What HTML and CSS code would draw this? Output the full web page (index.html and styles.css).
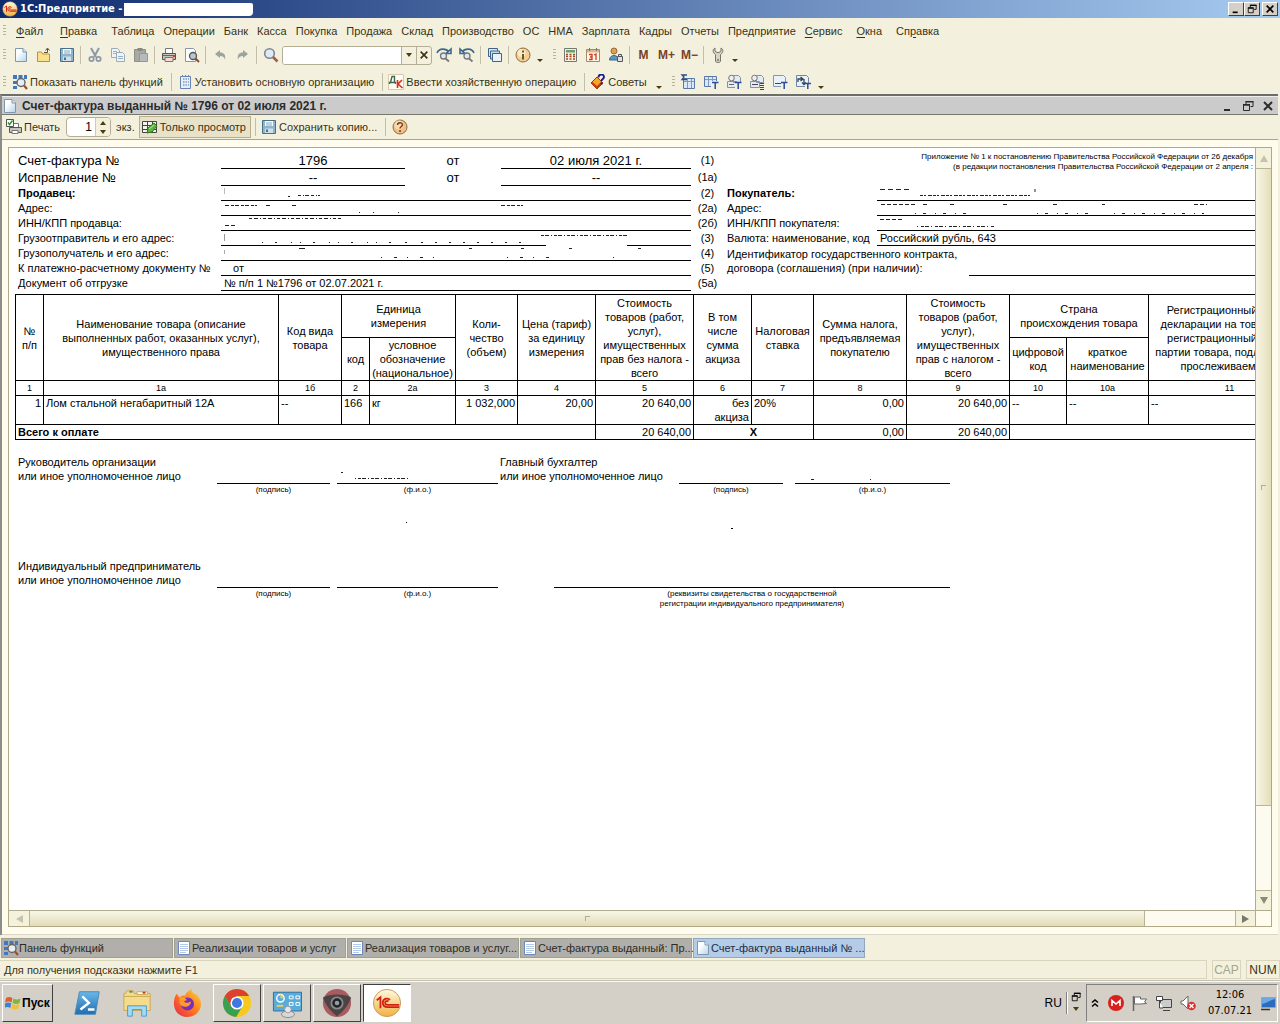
FILE: index.html
```html
<!DOCTYPE html>
<html lang="ru">
<head>
<meta charset="utf-8">
<title>1С:Предприятие</title>
<link rel="stylesheet" href="styles.css">
</head>
<body>
<svg class="defs" aria-hidden="true">
  <defs>
    <linearGradient id="g-page" x1="0" y1="0" x2="1" y2="1"><stop offset="0.3" stop-color="#fff"/><stop offset="1" stop-color="#b4d4ea"/></linearGradient>
    <linearGradient id="g-orb" x1="0" y1="0" x2="0" y2="1"><stop offset="0" stop-color="#fffbe0"/><stop offset="1" stop-color="#f0b040"/></linearGradient>
    <linearGradient id="g-blue" x1="0" y1="0" x2="0" y2="1"><stop offset="0" stop-color="#6ab8e8"/><stop offset="1" stop-color="#1f6db0"/></linearGradient>
    <linearGradient id="g-fire" x1="1" y1="0" x2="0" y2="1"><stop offset="0" stop-color="#ffd838"/><stop offset="0.5" stop-color="#ff7a20"/><stop offset="1" stop-color="#e8204c"/></linearGradient>
  </defs>
  <symbol id="i-1c" viewBox="0 0 32 32"><circle cx="16" cy="16" r="14.5" fill="url(#g-orb)" stroke="#c89858"/><path d="M5 13l4-3v11.500M19 13c-1-2.500-7-2.500-7.500 2.500 0 4 2.500 5 5.500 5h12M17.500 14.500c-1-1-3.500-1-3.500 1.200 0 1.800 1.500 2.300 3 2.300h12" fill="none" stroke="#d42010" stroke-width="1.900"/></symbol>
  <symbol id="i-new" viewBox="0 0 16 16"><path d="M2.500 1.500h7.500l3.500 3.500v9.500h-11z" fill="url(#g-page)" stroke="#7f98b0"/><path d="M10 1.500V5h3.500" fill="#dce9f4" stroke="#7f98b0"/></symbol>
  <symbol id="i-doc" viewBox="0 0 16 16"><path d="M2.500 1.500h11v13h-11z" fill="#fff" stroke="#6a88b8"/><path d="M4 4.500h8M4 6.500h8M4 8.500h8M4 10.500h8M4 12.500h6" stroke="#b4cae8"/></symbol>
  <symbol id="i-open" viewBox="0 0 16 16"><path d="M1.500 14.500V5h4l1 2h7v7.500z" fill="#fbe08a" stroke="#b5914a"/><path d="M8 5.500h3.500V2M9.500 3.500l2-2.500 2 2.500" fill="none" stroke="#5a5030"/></symbol>
  <symbol id="i-save" viewBox="0 0 16 16"><path d="M1.500 1.500h13v13h-13z" fill="#8fb4cc" stroke="#47708c"/><path d="M4 2h8v5H4z" fill="#f4fafd"/><path d="M4 9.500h8V14H4z" fill="#cfe0ea"/><path d="M5 4h6M5 6h6" stroke="#88a8bc"/><path d="M5 10.500h2V13H5z" fill="#47708c"/></symbol>
  <symbol id="i-cut" viewBox="0 0 16 16"><path d="M4 1l5 9M12 1L7 10" stroke="#8c98a4" stroke-width="2"/><circle cx="4.500" cy="12" r="2.200" fill="none" stroke="#8c98a4" stroke-width="1.700"/><circle cx="11.500" cy="12" r="2.200" fill="none" stroke="#8c98a4" stroke-width="1.700"/></symbol>
  <symbol id="i-copy" viewBox="0 0 16 16"><path d="M1.500 1.500h6l2 2v7h-8z" fill="#eef3f6" stroke="#9aabba"/><path d="M6.500 5.500h6l2 2v7h-8z" fill="#eef3f6" stroke="#9aabba"/><path d="M3 4.500h4M3 6.500h3M8 9.500h5M8 11.500h5" stroke="#9ab0c4"/></symbol>
  <symbol id="i-paste" viewBox="0 0 16 16"><path d="M1.500 2.500h11v12h-11z" fill="#a9a9a0" stroke="#8f8f88"/><path d="M4.500 1h5v3h-5z" fill="#8a8a84"/><path d="M6.500 6.500h8v8h-8z" fill="#b4bac0" stroke="#8f98a0"/></symbol>
  <symbol id="i-print" viewBox="0 0 16 16"><path d="M4.500 1.500h7v5h-7z" fill="#fff" stroke="#777"/><path d="M1.500 6.500h13v6h-13z" fill="#c8c4bc" stroke="#555"/><path d="M4 10.500h8v4H4z" fill="#f6dcd4" stroke="#777"/><path d="M2 8.500h12" stroke="#666"/><path d="M12 9h2v1h-2z" fill="#d04020"/></symbol>
  <symbol id="i-preview" viewBox="0 0 16 16"><path d="M1.500 1.500h8l2 2v11h-10z" fill="#fff" stroke="#8298b0"/><circle cx="9" cy="9" r="3.500" fill="#b9c6ce" stroke="#555" stroke-width="1.300"/><path d="M11.500 11.500L15 15" stroke="#834a3a" stroke-width="2"/></symbol>
  <symbol id="i-undo" viewBox="0 0 16 16"><path d="M3 7l5-4v2.500c4 0 6 2.500 5 7-1-3-2.500-3.500-5-3.500V11z" fill="#9da39f"/></symbol>
  <symbol id="i-redo" viewBox="0 0 16 16"><path d="M13 7L8 3v2.500c-4 0-6 2.500-5 7 1-3 2.500-3.500 5-3.500V11z" fill="#9da39f"/></symbol>
  <symbol id="i-find" viewBox="0 0 16 16"><circle cx="6.500" cy="6.500" r="4.800" fill="#dfeaf4" stroke="#7d8896" stroke-width="1.600"/><path d="M10 10l4.500 4.500" stroke="#a0604a" stroke-width="2.600"/></symbol>
  <symbol id="i-findnext" viewBox="0 0 16 16"><path d="M1 6c2-5 9-5 12-1M15 2v4.500h-5z" fill="none" stroke="#3f6a8c" stroke-width="1.600"/><circle cx="7.500" cy="9" r="3" fill="#dfe8ee" stroke="#777" stroke-width="1.300"/><path d="M9.500 11.500l3.500 3" stroke="#777" stroke-width="1.800"/></symbol>
  <symbol id="i-findprev" viewBox="0 0 16 16"><path d="M15 6C13 1 6 1 3 5M1 2v4.500h5z" fill="none" stroke="#3f6a8c" stroke-width="1.600"/><circle cx="8" cy="9" r="3" fill="#dfe8ee" stroke="#777" stroke-width="1.300"/><path d="M10 11.500l3.500 3" stroke="#777" stroke-width="1.800"/></symbol>
  <symbol id="i-windows" viewBox="0 0 16 16"><path d="M1.500 1.500h9v8h-9z" fill="#dbe6ef" stroke="#3e6488"/><path d="M3.500 4h9v8h-9z" fill="#c6d9e8" stroke="#3e6488"/><path d="M5.500 6.500h9v8h-9z" fill="#e8f2f8" stroke="#3e6488"/></symbol>
  <symbol id="i-info" viewBox="0 0 16 16"><circle cx="8" cy="8" r="7" fill="#f3cf94" stroke="#8f6a3c"/><circle cx="6.500" cy="6" r="4" fill="#fbe9c8"/><path d="M8 7v5.500M8 3.500v2" stroke="#6a5a20" stroke-width="2"/></symbol>
  <symbol id="i-help" viewBox="0 0 16 16"><circle cx="8" cy="8" r="7" fill="#f2bf86" stroke="#8f6a3c"/><circle cx="7" cy="6" r="4.500" fill="#f9dcb4"/><path d="M5.500 6c0-3 5-3 5-.200C10.500 7.500 8 7.500 8 9.500M8 11v2" fill="none" stroke="#7a3f18" stroke-width="1.500"/></symbol>
  <symbol id="i-calc" viewBox="0 0 16 16"><path d="M2.500 1.500h12v13h-12z" fill="#f6f0d8" stroke="#777"/><path d="M4 3h9v2.500H4z" fill="#6aa06a"/><path d="M4 7.500h9M4 9.500h9M4 12h9" stroke="#a04830" stroke-width="1.300" stroke-dasharray="2 1.500"/></symbol>
  <symbol id="i-cal" viewBox="0 0 16 16"><path d="M1.500 2.500h13v12h-13z" fill="#fff6e8" stroke="#a58a68"/><path d="M2 3h12v2.500H2z" fill="#d8b890"/><path d="M4 7.500h3v5H4M5 10h2M9 8l2-1v6" fill="none" stroke="#d03a20" stroke-width="1.300"/><path d="M4.500 1v3M11.500 1v3" stroke="#776"/></symbol>
  <symbol id="i-user" viewBox="0 0 16 16"><circle cx="6" cy="4" r="3" fill="#e0a050" stroke="#9a6830"/><path d="M1.500 13c0-6 9-6 9 0z" fill="#5c98c0" stroke="#3a6888"/><path d="M9.500 9.500h5v5h-5zM10.500 9V7.500h3V9" fill="#dde2e4" stroke="#555"/></symbol>
  <symbol id="i-wrench" viewBox="0 0 16 16"><path d="M5 1v3l2 1.500h2L11 4V1c3 1.500 2 5-.5 6.500V14c0 2-5 2-5 0V7.500C3 6 2 2.500 5 1z" fill="#d8d4c4" stroke="#76746c"/><circle cx="8" cy="13" r="1" fill="#76746c"/></symbol>
  <symbol id="i-panel" viewBox="0 0 16 16"><path d="M1 1h4v4H1zM6.500 1h4v4h-4zM12 1h3v4h-3zM1 7h4v3H1zM1 12h4v3H1z" fill="#3f78c0"/><circle cx="9" cy="8.500" r="4" fill="#e8eef4" stroke="#666" stroke-width="1.400"/><path d="M12 11.500l3 3.500" stroke="#9a5034" stroke-width="2.200"/></symbol>
  <symbol id="i-org" viewBox="0 0 16 16"><path d="M3.500 2.500h10v12h-10z" fill="#e6eef8" stroke="#6884b0"/><path d="M6 5h6M6 8h6M6 11h6" stroke="#7f9cc8" stroke-width="1.500" stroke-dasharray="1.500 1"/><path d="M5.500 1v2M8.500 1v2M11.500 1v2" stroke="#6884b0"/></symbol>
  <symbol id="i-dk" viewBox="0 0 16 16"><path d="M.5.500h15v15H.5z" fill="#fffdf6" stroke="#d8c8b0"/><path d="M1.500 10V8.500h6V10M2.500 8.500L4 2.500h2.500v6" fill="none" stroke="#3a6a4a" stroke-width="1.400"/><path d="M9.500 6v8M14 6l-4 4 4.500 4" fill="none" stroke="#d83018" stroke-width="1.600"/></symbol>
  <symbol id="i-tips" viewBox="0 0 16 16"><path d="M1 9l6-6 6 6-6 6z" fill="#f4a820" stroke="#a03810"/><path d="M1 9l6 6 6-6-2-1-4 4-4.500-4z" fill="#c83c14"/><path d="M8.500 3.500C8.500-.5 14-.5 14 3c0 2-2.500 2-2.500 4M11.500 8.500v2" fill="none" stroke="#20208c" stroke-width="1.900"/></symbol>
  <symbol id="i-sum" viewBox="0 0 16 16"><path d="M3.500 4.500h11v10h-11z" fill="#dce8f6" stroke="#5878a8"/><path d="M7.500 5v9M11.500 5v9M4 7.500h10" stroke="#7e98c0"/><path d="M7 1H2l2 2-2 2.500h5" fill="none" stroke="#2c4c88" stroke-width="1.300"/></symbol>
  <symbol id="i-tabt" viewBox="0 0 16 16"><path d="M1.500 2.500h12v10h-12z" fill="#dce8f6" stroke="#5878a8"/><path d="M5.500 3v9M9.500 3v9M2 5.500h11" stroke="#7e98c0"/><path d="M8 7h8v9H8z" fill="#f3f1de"/><path d="M9 8.500h6.500M12.200 8.500V15" stroke="#2c4c98" stroke-width="1.500"/></symbol>
  <symbol id="i-lett" viewBox="0 0 16 16"><path d="M1.500 7.500h9v6h-9zM7.500 1.500h5l2 2v5h-7z" fill="#e4ebf2" stroke="#8492a4"/><circle cx="5.500" cy="4" r="2.800" fill="#eee" stroke="#777"/><path d="M3 10.500h5" stroke="#667"/><path d="M9 8h7v8H9z" fill="#f3f1de"/><path d="M9 8.500h6.500M12.200 8.500V15" stroke="#2c4c98" stroke-width="1.500"/></symbol>
  <symbol id="i-letl" viewBox="0 0 16 16"><path d="M1.500 7.500h9v6h-9zM7.500 1.500h5l2 2v5h-7z" fill="#e4ebf2" stroke="#8492a4"/><circle cx="5.500" cy="4" r="2.800" fill="#eee" stroke="#777"/><path d="M3 10.500h6M11 9.500h4M11 11.500h4M11 13.500h4M11 15.500h4" stroke="#445"/></symbol>
  <symbol id="i-doct" viewBox="0 0 16 16"><path d="M1.500 1.500h10l2 2v9h-12z" fill="#e9f1f9" stroke="#8098b8"/><path d="M3 9.500h6" stroke="#445"/><path d="M9 8h7v8H9z" fill="#f3f1de"/><path d="M9 8.500h6.500M12.200 8.500V15" stroke="#2c4c98" stroke-width="1.500"/></symbol>
  <symbol id="i-arrt" viewBox="0 0 16 16"><path d="M1.500 1.500h10l2 2v9h-12z" fill="#e9f1f9" stroke="#7088a8"/><path d="M3 8V5h4M5.500 3L8 5 5.500 7M9 5v5M7 8.500l2 2 2-2" fill="none" stroke="#345" stroke-width="1.300"/><path d="M10 9h6v7h-6z" fill="#f3f1de"/><path d="M10 9.500h6M12.800 9.500V15" stroke="#2c4c98" stroke-width="1.500"/></symbol>
  <symbol id="i-printok" viewBox="0 0 16 16"><path d="M6.500 4.500h6v4h-6z" fill="#fff" stroke="#777"/><path d="M3.500 8.500h12v5h-12z" fill="#c8c4bc" stroke="#555"/><path d="M6 11.500h6v3H6z" fill="#fff" stroke="#777"/><path d="M.5.500h7v7h-7z" fill="#fff" stroke="#555"/><path d="M2 3.500l1.500 2 3-4" fill="none" stroke="#2c9a2c" stroke-width="1.500"/></symbol>
  <symbol id="i-view" viewBox="0 0 16 16"><path d="M.5 2.500h14v11H.5z" fill="#f4f4ec" stroke="#444"/><path d="M1 6.500h13M1 10.500h13M5.500 3v10M10.500 3v10" stroke="#444"/><path d="M5 14l1-5 6-5 3 3-5 6z" fill="#5cb838" stroke="#2d7a20"/><path d="M7 10l5-4" stroke="#b8e8a0"/></symbol>
  <symbol id="i-min" viewBox="0 0 12 12"><path d="M2 9h6v2H2z" fill="currentColor"/></symbol>
  <symbol id="i-restore" viewBox="0 0 12 12"><path d="M4 4V1.500h7v5H8.500M1.500 5h6v5.500h-6z" fill="none" stroke="currentColor"/><path d="M3.500 1h8v1.500h-8zM1 4h7v1.500H1z" fill="currentColor"/></symbol>
  <symbol id="i-close" viewBox="0 0 12 12"><path d="M2 2l8 8M10 2l-8 8" stroke="currentColor" stroke-width="2"/></symbol>
</svg>

<header class="titlebar">
  <svg class="ico"><use href="#i-1c"/></svg>
  <h1 class="titlebar-text">1С:Предприятие -</h1>
  <span class="titlebar-blank"></span>
  <span class="win-controls">
    <button class="winbtn" aria-label="Свернуть"><svg><use href="#i-min"/></svg></button>
    <button class="winbtn" aria-label="Восстановить"><svg><use href="#i-restore"/></svg></button>
    <button class="winbtn winbtn-close" aria-label="Закрыть"><svg><use href="#i-close"/></svg></button>
  </span>
</header>

<nav class="menubar">
  <span class="grip"></span>
  <button class="menu wide"><u>Ф</u>айл</button>
  <button class="menu roomier"><u>П</u>равка</button>
  <button class="menu">Таблица</button>
  <button class="menu">Операции</button>
  <button class="menu">Банк</button>
  <button class="menu">Касса</button>
  <button class="menu">Покупка</button>
  <button class="menu">Продажа</button>
  <button class="menu">Склад</button>
  <button class="menu">Производство</button>
  <button class="menu">ОС</button>
  <button class="menu">НМА</button>
  <button class="menu">Зарплата</button>
  <button class="menu">Кадры</button>
  <button class="menu">Отчеты</button>
  <button class="menu">Предприятие</button>
  <button class="menu roomier"><u>С</u>ервис</button>
  <button class="menu roomier"><u>О</u>кна</button>
  <button class="menu">Сп<u>р</u>авка</button>
</nav>

<div class="toolbar" role="toolbar" aria-label="Стандартная">
  <span class="grip"></span>
  <button class="tool" aria-label="Новый"><svg class="ico"><use href="#i-new"/></svg></button>
  <button class="tool" aria-label="Открыть"><svg class="ico"><use href="#i-open"/></svg></button>
  <button class="tool" aria-label="Сохранить"><svg class="ico"><use href="#i-save"/></svg></button>
  <span class="sep"></span>
  <button class="tool" aria-label="Вырезать"><svg class="ico"><use href="#i-cut"/></svg></button>
  <button class="tool" aria-label="Копировать"><svg class="ico"><use href="#i-copy"/></svg></button>
  <button class="tool" aria-label="Вставить"><svg class="ico"><use href="#i-paste"/></svg></button>
  <span class="sep"></span>
  <button class="tool" aria-label="Печать"><svg class="ico"><use href="#i-print"/></svg></button>
  <button class="tool" aria-label="Просмотр"><svg class="ico"><use href="#i-preview"/></svg></button>
  <span class="sep"></span>
  <button class="tool" aria-label="Отменить"><svg class="ico"><use href="#i-undo"/></svg></button>
  <button class="tool" aria-label="Повторить"><svg class="ico"><use href="#i-redo"/></svg></button>
  <span class="sep"></span>
  <button class="tool" aria-label="Найти"><svg class="ico"><use href="#i-find"/></svg></button>
  <span class="combo">
    <input class="combo-input" type="text" aria-label="Строка поиска">
    <button class="combo-btn" aria-label="Список"><span class="tri-down"></span></button>
    <button class="combo-btn" aria-label="Очистить"><svg class="x"><use href="#i-close"/></svg></button>
  </span>
  <button class="tool" aria-label="Найти далее"><svg class="ico"><use href="#i-findnext"/></svg></button>
  <button class="tool" aria-label="Найти ранее"><svg class="ico"><use href="#i-findprev"/></svg></button>
  <span class="sep"></span>
  <button class="tool" aria-label="Окна"><svg class="ico"><use href="#i-windows"/></svg></button>
  <span class="sep"></span>
  <button class="tool" aria-label="Справка"><svg class="ico"><use href="#i-info"/></svg></button>
  <button class="more" aria-label="Ещё"><span class="tri-down"></span></button>
  <span class="grip grip-mid"></span>
  <button class="tool" aria-label="Калькулятор"><svg class="ico"><use href="#i-calc"/></svg></button>
  <button class="tool" aria-label="Календарь"><svg class="ico"><use href="#i-cal"/></svg></button>
  <button class="tool" aria-label="Пользователь"><svg class="ico"><use href="#i-user"/></svg></button>
  <span class="sep"></span>
  <button class="tool mem">M</button>
  <button class="tool mem">M+</button>
  <button class="tool mem">M−</button>
  <span class="sep"></span>
  <button class="tool" aria-label="Сервис"><svg class="ico"><use href="#i-wrench"/></svg></button>
  <button class="more" aria-label="Ещё"><span class="tri-down"></span></button>
</div>

<div class="toolbar toolbar-2" role="toolbar" aria-label="Функции">
  <span class="grip"></span>
  <button class="labelled"><svg class="ico"><use href="#i-panel"/></svg>Показать панель функций</button>
  <span class="sep"></span>
  <button class="labelled"><svg class="ico"><use href="#i-org"/></svg>Установить основную организацию</button>
  <span class="sep"></span>
  <button class="labelled"><svg class="ico"><use href="#i-dk"/></svg>Ввести хозяйственную операцию</button>
  <span class="sep"></span>
  <button class="labelled"><svg class="ico"><use href="#i-tips"/></svg>Советы</button>
  <button class="more" aria-label="Ещё"><span class="tri-down"></span></button>
  <span class="grip grip-mid"></span>
  <button class="tool" aria-label="Итоги"><svg class="ico"><use href="#i-sum"/></svg></button>
  <button class="tool" aria-label="Таблица"><svg class="ico"><use href="#i-tabt"/></svg></button>
  <button class="tool" aria-label="Поиск в тексте"><svg class="ico"><use href="#i-lett"/></svg></button>
  <button class="tool" aria-label="Поиск в списке"><svg class="ico"><use href="#i-letl"/></svg></button>
  <button class="tool" aria-label="Текст"><svg class="ico"><use href="#i-doct"/></svg></button>
  <button class="tool" aria-label="Переход"><svg class="ico"><use href="#i-arrt"/></svg></button>
  <button class="more" aria-label="Ещё"><span class="tri-down"></span></button>
</div>

<main class="child">
  <div class="child-title">
    <svg class="ico"><use href="#i-new"/></svg>
    <h2 class="child-name">Счет-фактура выданный № 1796 от 02 июля 2021 г.</h2>
    <span class="child-controls">
      <button class="flat" aria-label="Свернуть"><svg><use href="#i-min"/></svg></button>
      <button class="flat" aria-label="Восстановить"><svg><use href="#i-restore"/></svg></button>
      <button class="flat" aria-label="Закрыть"><svg><use href="#i-close"/></svg></button>
    </span>
  </div>
  <div class="toolbar child-tools" role="toolbar" aria-label="Документ">
    <button class="labelled"><svg class="ico"><use href="#i-printok"/></svg>Печать</button>
    <span class="spin">
      <input class="spin-input" id="copies" type="text" value="1">
      <span class="spin-btns">
        <button class="spin-btn" aria-label="Больше"><span class="tri-up"></span></button>
        <button class="spin-btn" aria-label="Меньше"><span class="tri-down"></span></button>
      </span>
    </span>
    <label class="spin-label" for="copies">экз.</label>
    <button class="labelled pressed" aria-pressed="true"><svg class="ico"><use href="#i-view"/></svg>Только просмотр</button>
    <span class="sep"></span>
    <button class="labelled"><svg class="ico"><use href="#i-save"/></svg>Сохранить копию...</button>
    <span class="sep"></span>
    <button class="tool" aria-label="Справка"><svg class="ico"><use href="#i-help"/></svg></button>
  </div>

  <div class="pane">
    <div class="sheet">
      <div class="paper">
        <section class="head">
          <div class="lead">
            <span class="big">Счет-фактура №</span><span class="big val mid">1796</span><span class="big mid">от</span><span class="big val mid">02 июля 2021 г.</span><span class="num">(1)</span>
            <span class="big">Исправление №</span><span class="big val mid">--</span><span class="big mid">от</span><span class="big val mid">--</span><span class="num">(1а)</span>
            <p class="annex">Приложение № 1 к постановлению Правительства Российской Федерации от 26 декабря<br>(в редакции постановления Правительства Российской Федерации от 2 апреля :</p>
          </div>
          <div class="party seller">
            <b>Продавец:</b>
            <span class="val"><svg class="rest"><path d="M3.500 2v6" stroke="#bbb"/><path d="M67 10.500h2M77 9.500h22" stroke-dasharray="3 2 1 1 4 2"/></svg></span><span class="num">(2)</span>
            <span>Адрес:</span>
            <span class="val"><svg class="rest"><path d="M4 4.500h32M45 4.500h6M71 4.500h6M280 4.500h22" stroke-dasharray="4 2 3 1"/><path d="M138 11.500h1M152 11.500h1M177 11.500h1"/></svg></span><span class="num">(2а)</span>
            <span>ИНН/КПП продавца:</span>
            <span class="val"><svg class="rest"><path d="M28 2.500h92" stroke-dasharray="3 2 4 2 1 2"/><path d="M4 9.500h10" stroke-dasharray="4 2"/></svg></span><span class="num">(2б)</span>
            <span>Грузоотправитель и его адрес:</span>
            <span class="val gap"><svg class="rest"><path d="M3.500 3v7" stroke="#999"/><path d="M41 11.500h140" stroke-dasharray="1 12 2 14 1 8"/><path d="M184 11.500h6M200 11.500h110" stroke-dasharray="2 12"/><path d="M320 4.500h88" stroke-dasharray="3 1 4 2 1 2"/></svg></span><span class="num">(3)</span>
            <span>Грузополучатель и его адрес:</span>
            <span class="val"><svg class="rest"><path d="M3.500 4v4" stroke="#aaa"/><path d="M78 2.500h6M248 2.500h3M300 2.500h3M348 2.500h3M417 2.500h3"/><path d="M160 11.500h54M286 11.500h46M392 11.500h10" stroke-dasharray="1 12 3 10"/></svg></span><span class="num">(4)</span>
            <span>К платежно-расчетному документу №</span>
            <span class="val indent">от</span><span class="num">(5)</span>
            <span>Документ об отгрузке</span>
            <span class="val">№ п/п 1 №1796 от 02.07.2021 г.</span><span class="num">(5а)</span>
          </div>
          <div class="party buyer">
            <b>Покупатель:</b>
            <span class="val"><svg class="rest"><path d="M3 3.500h30M158 3v3" stroke-dasharray="5 3"/><path d="M43 9.500h112" stroke-dasharray="3 1 2 2 4 1"/></svg></span>
            <span>Адрес:</span>
            <span class="val"><svg class="rest"><path d="M4 3.500h36M46 3.500h5M73 3.500h5M126 3.500h5M176 3.500h4M225 3.500h3M317 3.500h13" stroke-dasharray="4 2"/><path d="M38 12.500h52M160 12.500h60M237 12.500h90" stroke-dasharray="1 7 3 9"/></svg></span>
            <span>ИНН/КПП покупателя:</span>
            <span class="val"><svg class="rest"><path d="M3 3.500h24" stroke-dasharray="4 2"/><path d="M40 10.500h78" stroke-dasharray="1 3 3 1 4 2"/></svg></span>
            <span>Валюта: наименование, код</span>
            <span class="val">Российский рубль, 643</span>
            <span class="contract">Идентификатор государственного контракта,<br>договора (соглашения) (при наличии):</span><span class="val contract-val"></span>
          </div>
        </section>

        <table class="goods">
          <colgroup><col class="c28"><col class="c235"><col class="c63"><col class="c28"><col class="c86"><col class="c62"><col class="c78"><col class="c98"><col class="c58"><col class="c62"><col class="c93"><col class="c103"><col class="c57"><col class="c82"><col class="c162"></colgroup>
          <thead>
            <tr class="r-top">
              <th rowspan="2">№<br>п/п</th>
              <th rowspan="2">Наименование товара (описание<br>выполненных работ, оказанных услуг),<br>имущественного права</th>
              <th rowspan="2">Код вида<br>товара</th>
              <th colspan="2">Единица<br>измерения</th>
              <th rowspan="2">Коли-<br>чество<br>(объем)</th>
              <th rowspan="2">Цена (тариф)<br>за единицу<br>измерения</th>
              <th rowspan="2">Стоимость<br>товаров (работ,<br>услуг),<br>имущественных<br>прав без налога -<br>всего</th>
              <th rowspan="2">В том<br>числе<br>сумма<br>акциза</th>
              <th rowspan="2">Налоговая<br>ставка</th>
              <th rowspan="2">Сумма налога,<br>предъявляемая<br>покупателю</th>
              <th rowspan="2">Стоимость<br>товаров (работ,<br>услуг),<br>имущественных<br>прав с налогом -<br>всего</th>
              <th colspan="2">Страна<br>происхождения товара</th>
              <th rowspan="2">Регистрационный номер<br>декларации на товары или<br>регистрационный номер<br>партии товара, подлежащего<br>прослеживаемости</th>
            </tr>
            <tr class="r-sub">
              <th>код</th><th>условное<br>обозначение<br>(национальное)</th><th>цифровой<br>код</th><th>краткое<br>наименование</th>
            </tr>
            <tr class="r-num">
              <th>1</th><th>1а</th><th>1б</th><th>2</th><th>2а</th><th>3</th><th>4</th><th>5</th><th>6</th><th>7</th><th>8</th><th>9</th><th>10</th><th>10а</th><th>11</th>
            </tr>
          </thead>
          <tbody>
            <tr class="r-item">
              <td class="r">1</td><td>Лом стальной негабаритный 12А</td><td>--</td><td>166</td><td>кг</td><td class="r">1 032,000</td><td class="r">20,00</td><td class="r">20 640,00</td><td class="r">без<br>акциза</td><td>20%</td><td class="r">0,00</td><td class="r">20 640,00</td><td>--</td><td>--</td><td>--</td>
            </tr>
          </tbody>
          <tfoot>
            <tr>
              <th class="l" colspan="7">Всего к оплате</th><td class="r">20 640,00</td><th colspan="2">X</th><td class="r">0,00</td><td class="r">20 640,00</td><td colspan="3"></td>
            </tr>
          </tfoot>
        </table>

        <section class="signs">
          <p class="who">Руководитель организации<br>или иное уполномоченное лицо</p>
          <span class="line"></span>
          <span class="line fio"><svg class="rest"><path d="M4 17.500h2"/><path d="M18 23.500h54" stroke-dasharray="1 2 3 1 4 2"/></svg></span>
          <p class="who second">Главный бухгалтер<br>или иное уполномоченное лицо</p>
          <span class="line"></span>
          <span class="line fio"><svg class="rest"><path d="M16 24.500h3M75 24.500h1"/></svg></span>
          <span class="cap c1">(подпись)</span><span class="cap c2">(ф.и.о.)</span><span class="cap c4">(подпись)</span><span class="cap c5">(ф.и.о.)</span>
        </section>
        <svg class="specks" aria-hidden="true"><path d="M391 27.500h1M716 33.500h2" stroke="#000"/></svg>
        <section class="signs owner">
          <p class="who">Индивидуальный предприниматель<br>или иное уполномоченное лицо</p>
          <span class="line"></span>
          <span class="line fio"></span>
          <span class="line cert"></span>
          <span class="cap c1">(подпись)</span><span class="cap c2">(ф.и.о.)</span><span class="cap cert">(реквизиты свидетельства о государственной<br>регистрации индивидуального предпринимателя)</span>
        </section>
      </div>
      <div class="vbar">
        <span class="bar-btn"><span class="tri-up"></span></span>
        <span class="vthumb"></span>
        <span class="bar-btn"><span class="tri-down"></span></span>
      </div>
      <div class="hbar">
        <span class="bar-btn"><span class="tri-left"></span></span>
        <span class="hthumb"></span>
        <span class="bar-btn"><span class="tri-right"></span></span>
      </div>
      <span class="corner"></span>
    </div>
  </div>
</main>

<nav class="windows">
  <button class="wtab"><svg class="ico"><use href="#i-panel"/></svg>Панель функций</button>
  <button class="wtab"><svg class="ico"><use href="#i-doc"/></svg>Реализации товаров и услуг</button>
  <button class="wtab"><svg class="ico"><use href="#i-doc"/></svg>Реализация товаров и услуг...</button>
  <button class="wtab"><svg class="ico"><use href="#i-doc"/></svg>Счет-фактура выданный: Пр...</button>
  <button class="wtab active"><svg class="ico"><use href="#i-new"/></svg>Счет-фактура выданный № ...</button>
</nav>

<div class="status">
  <span class="status-text">Для получения подсказки нажмите F1</span>
  <span class="ind off">CAP</span>
  <span class="ind">NUM</span>
</div>

<footer class="taskbar">
  <button class="start"><svg class="ico" viewBox="0 0 16 16"><path d="M1 3c2-1.500 4-1.500 6.500 0L6.500 7.500c-2-1.500-4-1.500-6.500 0z" fill="#e0602c"/><path d="M8.500 3.500c2 1.200 4 1.200 7 0l-1 4.500c-2.500 1.200-4.500 1.200-7 0z" fill="#7cb840"/><path d="M0 8.500c2-1.500 4-1.500 6.300 0l-1 4.500c-2-1.500-4-1.500-6.300 0z" fill="#3f80d0"/><path d="M7.300 9c2 1.200 4 1.200 7 0l-1 4.500c-2.500 1.200-4.500 1.200-7 0z" fill="#f0c030"/></svg>Пуск</button>
  <button class="task plain" aria-label="PowerShell"><svg class="big-ico" viewBox="0 0 32 32"><path d="M8 4h21l-4 24H3z" fill="url(#g-blue)" stroke="#4888b8"/><path d="M11 9l7 7-9 7M17 23h7" fill="none" stroke="#fff" stroke-width="2.600"/></svg></button>
  <button class="task plain" aria-label="Проводник"><svg class="big-ico" viewBox="0 0 32 32"><path d="M2 6h2l1-3h7l1 3h17v18H2z" fill="#f4dc8c" stroke="#c8a850"/><path d="M2 9h28M16 4h11v3H16z" fill="#fffbe8" stroke="#c8a850"/><path d="M6 30V19h20v11h-5v-7H11v7z" fill="#a4daf2" stroke="#4898c8"/><path d="M8 4h3" stroke="#3c9c4c" stroke-width="2"/><path d="M22 5h3" stroke="#c03820" stroke-width="2"/></svg></button>
  <button class="task plain" aria-label="Firefox"><svg class="big-ico" viewBox="0 0 32 32"><path d="M2 16c0-4 1-7 3-10l3 4c2-2 4-2 6-2 1-3 3-5 7-7-1 3 2 5 5 6 3 3 5 6 5 10 0 8-7 14-15 14S2 25 2 16z" fill="url(#g-fire)"/><circle cx="16.500" cy="17" r="7" fill="#7b2fb8"/><path d="M8 10c3-1 6 0 8 3-2 0-3 1-3 2 3 2 6 0 7-1 1 6-9 9-12 2z" fill="#ff9a2c"/></svg></button>
  <button class="task" aria-label="Chrome"><svg class="big-ico" viewBox="0 0 32 32"><circle cx="16" cy="16" r="15" fill="#f8c820"/><path d="M3 8.500A15 15 0 0 1 29 8.500H16l-6.500 11z" fill="#dc4030"/><path d="M3 8.500A15 15 0 0 0 15 31l7-11.500h-12z" fill="#38a050"/><circle cx="16" cy="16" r="7" fill="#fff"/><circle cx="16" cy="16" r="5.400" fill="#3f78e0"/></svg></button>
  <button class="task" aria-label="Панель управления"><svg class="big-ico" viewBox="0 0 32 32"><path d="M1.500 4.500h30v20h-30z" fill="#58acdc" stroke="#2c6c9c"/><circle cx="9" cy="11" r="4" fill="none" stroke="#fff" stroke-width="1.500"/><path d="M9 11V6l4 5z" fill="#f4d040"/><path d="M18.500 8.500h4v3h-4zM25.500 8.500h4v3h-4zM18.500 15.500h4v3h-4zM25.500 15.500h4v3h-4z" fill="none" stroke="#fff"/><path d="M5 19h7" stroke="#f4d040" stroke-width="2"/><ellipse cx="17" cy="28" rx="7" ry="3.500" fill="#d8d8d8" stroke="#888"/><circle cx="17" cy="23" r="3.500" fill="#e8e8e8" stroke="#999"/></svg></button>
  <button class="task" aria-label="Камера"><svg class="big-ico" viewBox="0 0 32 32"><circle cx="16" cy="16" r="15" fill="#a85c60"/><path d="M1 10c8-4 22-4 30 0-2 7-8 15-15 20C9 25 3 17 1 10z" fill="#4c4444"/><circle cx="16" cy="16" r="6" fill="#222" stroke="#888" stroke-width="2"/><circle cx="16" cy="16" r="2.500" fill="#8aa0a8"/></svg></button>
  <button class="task current" aria-label="1С"><svg class="big-ico"><use href="#i-1c"/></svg></button>
  <span class="lang">RU</span>
  <span class="lang-tools"><svg class="mini"><use href="#i-restore"/></svg><span class="tri-down"></span></span>
  <div class="tray">
    <svg class="mini" viewBox="0 0 10 10"><path d="M2 4.500L5 2l3 2.500M2 8.500L5 6l3 2.500" fill="none" stroke="#000" stroke-width="1.500"/></svg>
    <svg class="ico" viewBox="0 0 16 16"><circle cx="8" cy="8" r="8" fill="#d8201c"/><path d="M4 11V5.500l4 3.500 4-3.500V11" fill="none" stroke="#fff" stroke-width="1.600"/></svg>
    <svg class="ico" viewBox="0 0 16 16"><path d="M1.500 1v15" stroke="#666" stroke-width="1.500"/><path d="M2.500 2h6v2h6l-2 3 2 1.500-6 .500V9h-6z" fill="#fff" stroke="#666"/></svg>
    <svg class="ico" viewBox="0 0 16 16"><path d="M4.500 4.500h11v8h-11z" fill="#ccc" stroke="#444"/><path d="M7 15.500h7M.5 1.500h6v4h-6zM3.500 6v7H7" fill="#fff" stroke="#444"/></svg>
    <svg class="ico" viewBox="0 0 16 16"><path d="M1 6h2l5-5v13l-5-5H1z" fill="#fff" stroke="#666"/><circle cx="11.500" cy="11" r="4.300" fill="#d83030"/><path d="M9.500 9l4 4M13.500 9l-4 4" stroke="#fff" stroke-width="1.400"/></svg>
    <time class="clock">12:06<br>07.07.21</time>
    <svg class="ico" viewBox="0 0 16 16"><path d="M1.500 2.500h14v10h-14z" fill="#2c6cc0" stroke="#88a8c8"/><path d="M2 9c5-1 8-4 13-5V3H2z" fill="#6ca8e4"/><path d="M1 14.500h9" stroke="#333" stroke-width="1.500"/></svg>
  </div>
</footer>
</body>
</html>
```
FILE: styles.css
```css
* { box-sizing: border-box; }

body {
  margin: 0;
  min-height: 100vh;
  display: flex;
  flex-direction: column;
  background: #f3f1de;
  color: #3a3214;
  font: 11px/14px "Liberation Sans", Arial, sans-serif;
  overflow-x: hidden;
}

h1, h2, p { margin: 0; font: inherit; }
button, input { font: inherit; color: inherit; margin: 0; }
button { border: 0; padding: 0; background: none; white-space: nowrap; }

.defs { position: absolute; width: 0; height: 0; }
.ico { width: 16px; height: 16px; flex: none; }

.tri-down, .tri-up { width: 0; height: 0; border: 3px solid transparent; }
.tri-down { border-top: 4px solid #4a3c10; border-bottom: 0; }
.tri-up { border-bottom: 4px solid #4a3c10; border-top: 0; }
.tri-left, .tri-right { width: 0; height: 0; border: 4px solid transparent; }
.tri-left { border-right: 7px solid #c4c4ae; border-left: 0; }
.tri-right { border-left: 7px solid #77776a; border-right: 0; }

/* application title */
.titlebar {
  height: 18px;
  flex: none;
  display: flex;
  align-items: center;
  padding: 0 2px;
  gap: 2px;
  background: linear-gradient(90deg, #0e2a6e, #a6caf0);
}
.titlebar-text { color: #fff; font-family: "DejaVu Sans Condensed", "DejaVu Sans", sans-serif; font-weight: bold; white-space: nowrap; }
.titlebar-blank { width: 129px; height: 13px; background: #fff; border-radius: 0 2px 4px 0; }
.win-controls { margin-left: auto; display: flex; }
.winbtn {
  width: 16px;
  height: 14px;
  display: grid;
  place-items: center;
  background: #d4d0c8;
  color: #000;
  border: 1px solid;
  border-color: #fff #404040 #404040 #fff;
}
.winbtn svg { width: 10px; height: 10px; }
.winbtn-close { margin-left: 2px; }

/* menu and tool bars */
.menubar { height: 25px; flex: none; display: flex; align-items: center; padding-left: 3px; gap: 9px; }
.menubar .grip { margin-right: 1px; }
.menu.wide { margin-right: 8px; }
.menu.roomier { margin-right: 5px; }
.menu u { text-underline-offset: 2px; }
.grip { width: 3px; height: 12px; flex: none; background: repeating-linear-gradient(#b8b49c 0 1px, transparent 1px 3px); }
.grip-mid { margin: 0 2px 0 7px; }
.toolbar { height: 24px; flex: none; display: flex; align-items: center; padding-left: 3px; }
.toolbar > .grip:first-child { margin-right: 3px; }
.toolbar-2 { height: 27px; padding-top: 2px; }
.tool { width: 23px; height: 22px; flex: none; display: grid; place-items: center; }
.mem { font-weight: bold; font-size: 12px; color: #7a4028; }
.sep { width: 1px; height: 18px; margin: 0 2px; flex: none; background: #c2beaa; }
.more { width: 12px; height: 18px; display: flex; align-items: flex-end; justify-content: center; padding-bottom: 2px; }
.more .tri-down { border-top-width: 3px; }
.labelled { display: flex; align-items: center; gap: 2px; height: 20px; padding: 0 6px 0 3px; }
.combo { width: 150px; height: 19px; display: flex; border: 1px solid #b4ae94; border-radius: 3px; background: #f3f1de; overflow: hidden; }
.combo-input { flex: 1; min-width: 0; border: 0; padding: 0 3px; background: #fff; }
.combo-btn { width: 15px; display: grid; place-items: center; border-left: 1px solid #b4ae94; }
.x { width: 10px; height: 10px; }

/* document window */
.child { flex: 1; display: flex; flex-direction: column; border-top: 2px solid #6c6c68; border-left: 2px solid #8c8c88; margin-right: 2px; background: #fffcee; }
.child-title { height: 19px; display: flex; align-items: center; gap: 4px; padding-right: 4px; background: #cbcbcb; border-top: 1px solid #eee; border-bottom: 1px solid #77776e; color: #2c2c2c; }
.child-name { font-size: 12px; font-weight: bold; }
.child-controls { margin-left: auto; display: flex; gap: 8px; }
.flat svg { width: 12px; height: 12px; display: block; }
.child-tools { height: 25px; background: #f3f1de; border-bottom: 1px solid #a8a488; padding-left: 1px; }
.spin { width: 45px; height: 20px; display: flex; border: 1px solid #b4ae94; border-radius: 4px; overflow: hidden; background: #fff; margin-right: 5px; }
.spin-input { flex: 1; min-width: 0; border: 0; text-align: right; padding: 0 3px; background: none; color: #000; font-size: 12px; }
.spin-btns { width: 15px; display: grid; background: #f3f1de; border-left: 1px solid #d0ccb4; }
.spin-btn { display: grid; place-items: center; }
.spin-label { margin-right: 4px; }
.pressed { border: 1px solid #b8b08c; background: #e8e2c8; height: 22px; padding: 0 4px 0 2px; margin-right: 2px; }
.pane { flex: 1; display: flex; padding: 7px 6px 7px; border-bottom: 1px solid #d8d6c8; }
.sheet { flex: 1; min-width: 0; display: grid; grid-template: minmax(0, 1fr) 16px / minmax(0, 1fr) 16px; border: 1px solid #b0a888; background: #fff; }

.paper { overflow: hidden; padding: 4px 0 0 6px; color: #000; }

/* invoice heading */
.head { display: grid; grid-template-columns: 712px minmax(0, 1fr); }
.lead { grid-column: 1 / -1; display: grid; grid-template: 17px 17px / 206px 184px 96px 190px 36px 1fr; line-height: 17px; }
.big { font-size: 13px; padding-left: 3px; white-space: nowrap; }
.big.mid { text-align: center; padding: 0; }
.num { text-align: center; padding-right: 3px; }
.val { border-bottom: 1px solid #000; padding-left: 3px; height: 15px; white-space: nowrap; }
.big.val { height: 17px; }
.lead .annex { grid-area: 1 / 6 / 3 / 7; text-align: right; padding-right: 2px; font-size: 8px; line-height: 10px; white-space: nowrap; }
.party { display: grid; grid-auto-rows: 15px; align-content: start; white-space: nowrap; }
.seller { grid-template-columns: 206px 470px 36px; }
.seller > b, .seller > span:nth-child(3n + 1) { padding-left: 3px; }
.buyer { grid-template-columns: 150px 92px minmax(0, 1fr); }
.buyer .val { grid-column: 2 / -1; }
.buyer .contract { grid-column: 1 / 3; grid-row: span 2; padding-top: 1px; }
.buyer .contract-val { grid-column: 3; grid-row: span 2; height: 30px; }
.val.indent { padding-left: 12px; }
.val:has(.rest) { padding: 0; }
.rest { width: 100%; height: 100%; display: block; fill: none; stroke: #222; }
.gap { border-image: linear-gradient(90deg, #000 325px, transparent 325px 405px, #000 405px) 1; border-width: 0 0 1px; }

/* goods */
.goods { width: 1295px; table-layout: fixed; border-collapse: collapse; margin-top: 3px; }
.goods th, .goods td { border: 1px solid #000; padding: 0 2px; white-space: nowrap; }
.goods th { font-weight: normal; text-align: center; padding: 0; }
.goods td { vertical-align: top; text-align: left; }
.goods td.r { text-align: right; }
.goods .r-num th { font-size: 9px; }
.goods tfoot th { font-weight: bold; }
.goods th.l { text-align: left; padding-left: 2px; }
.r-top, .r-sub { height: 43px; }
.r-num { height: 15px; }
.r-item { height: 29px; }
.goods tfoot tr { height: 15px; }
.c28 { width: 28px; } .c235 { width: 235px; } .c63 { width: 63px; } .c86 { width: 86px; }
.c62 { width: 62px; } .c78 { width: 78px; } .c98 { width: 98px; } .c58 { width: 58px; }
.c93 { width: 93px; } .c103 { width: 103px; } .c57 { width: 57px; } .c82 { width: 82px; } .c162 { width: 162px; }

/* signatures */
.signs {
  display: grid;
  grid-template-columns: 202px 113px 7px 161px 2px 54px 125px 104px 12px 155px;
  margin-top: 15px;
  white-space: nowrap;
}
.who { grid-column: 1; padding-left: 3px; }
.who.second { grid-column: 6 / 8; padding: 0; }
.line { grid-column: 2; border-bottom: 1px solid #000; }
.line.fio { grid-column: 4; }
.second + .line { grid-column: 8; }
.second + .line + .fio { grid-column: 10; }
.line.cert, .cap.cert { grid-column: 6 / 11; }
.line.cert, .owner .cap.cert { margin-left: 54px; }
.signs .line, .signs .who { height: 29px; grid-row: 1; }
.cap { grid-row: 2; text-align: center; font-size: 8px; line-height: 10px; padding-top: 1px; }
.c1 { grid-column: 2; } .c2 { grid-column: 4; } .c4 { grid-column: 8; } .c5 { grid-column: 10; }
.specks { display: block; width: 100%; height: 49px; }

/* scroll bars */
.vbar { display: flex; flex-direction: column; border-left: 1px solid #b0ac90; background: #fdfbf0; }
.hbar { display: flex; border-top: 1px solid #b0ac90; background: #fdfbf0; }
.bar-btn { flex: none; display: grid; place-items: center; background: #f5f2dc; }
.vbar .bar-btn { height: 20px; }
.hbar .bar-btn { width: 20px; }
.vbar .tri-up, .vbar .tri-down { border-width: 4px; border-top-color: #8a8a78; border-bottom-color: #c4c4ae; }
.vbar .tri-up { border-top: 0; border-bottom-width: 7px; }
.vbar .tri-down { border-bottom: 0; border-top-width: 7px; }
.vthumb, .hthumb { display: grid; place-items: center; border: 1px solid #b8b494; }
.vthumb::after, .hthumb::after { content: ""; width: 4px; height: 4px; border: 1px solid #b0ac90; border-right: 0; border-bottom: 0; }
.vthumb { flex: 0 1 638px; margin-bottom: auto; border-width: 1px 0; background: linear-gradient(90deg, #f8f6e6, #e4deb8); }
.hthumb { flex: 0 1 1116px; margin-right: auto; border-width: 0 1px; background: linear-gradient(#f8f6e6, #e2dcb8); }
.bar-btn:last-child { border: 0 solid #b8b494; }
.vbar .bar-btn:last-child { border-top-width: 1px; }
.hbar .bar-btn:last-child { border-left-width: 1px; }
.corner { border: solid #b0ac90; border-width: 1px 0 0 1px; background: #fffcee; }

/* open windows and status */
.windows { height: 25px; flex: none; display: flex; align-items: center; padding: 0 0 0 1px; gap: 1px; }
.wtab { width: 172px; height: 20px; display: flex; align-items: center; gap: 0; padding-left: 1px; background: #b0afab; border: 1px solid #a0a090; color: #2c2c24; }
.wtab.active { background: #b4cce8; border-color: #8fa8bc; color: #1c2c44; }
.status { height: 21px; flex: none; display: flex; gap: 5px; line-height: 18px; padding-bottom: 1px; border-bottom: 1px solid #c4c2b2; }
.status-text { flex: 1; padding-left: 4px; border: 1px solid #d8d5bc; border-left: 0; }
.ind { border: 1px solid #d8d5bc; width: 34px; text-align: center; font-size: 12px; }
.ind.off { width: 29px; color: #a8a484; }

/* system taskbar */
.taskbar { height: 43px; flex: none; display: flex; align-items: center; gap: 2px; padding: 0 2px; background: #d4d0c8; border-top: 1px solid #f8f8f4; color: #000; }
.start { width: 51px; height: 38px; display: flex; align-items: center; gap: 1px; padding-left: 2px; font-size: 12px; font-weight: bold; border: 1px solid; border-color: #fff #404040 #404040 #fff; }
.task { width: 48px; height: 38px; display: grid; place-items: center; border: 1px solid; border-color: #fff #404040 #404040 #fff; }
.task.plain { border-color: transparent; }
.start + .task { margin-left: 8px; }
.task.current { background: #fff; border-color: #404040 #fff #fff #404040; }
.big-ico { width: 30px; height: 30px; }
.lang { margin-left: auto; font-size: 12px; padding-right: 2px; }
.lang-tools { height: 22px; display: flex; flex-direction: column; align-items: center; gap: 5px; padding: 0 2px 0 4px; border-left: 1px solid #808080; box-shadow: inset 1px 0 #fff; }
.mini { width: 10px; height: 10px; flex: none; }
.tray { height: 38px; display: flex; align-items: center; gap: 8px; padding: 0 1px 0 3px; margin-left: 1px; border: 1px solid; border-color: #808080 #fff #fff #808080; }
.clock { font: 11px/16px "DejaVu Sans Condensed", "DejaVu Sans", sans-serif; text-align: center; padding-left: 4px; }
```
